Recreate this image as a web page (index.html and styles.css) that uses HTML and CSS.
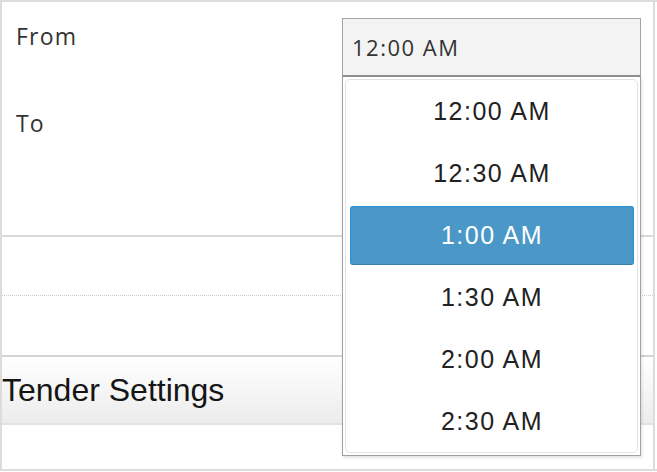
FILE: index.html
```html
<!DOCTYPE html>
<html lang="en">
<head>
<meta charset="utf-8">
<title>Store hours</title>
<link rel="stylesheet" href="styles.css">
</head>
<body>
<div class="page">
  <div class="frame">
    <div class="form">
      <div class="row row-from">
        <div class="label">From</div>
        <div class="select-wrap">
          <div class="select">12:00 AM</div>
          <div class="dropdown">
            <div class="inner">
              <ul class="options">
                <li class="option">12:00 AM</li>
                <li class="option">12:30 AM</li>
                <li class="option selected">1:00 AM</li>
                <li class="option">1:30 AM</li>
                <li class="option">2:00 AM</li>
                <li class="option">2:30 AM</li>
              </ul>
            </div>
          </div>
        </div>
      </div>
      <div class="row row-to">
        <div class="label">To</div>
      </div>
    </div>
    <div class="band band-dotted"></div>
    <div class="band band-plain"></div>
    <div class="section-head">Tender Settings</div>
  </div>
</div>
</body>
</html>
```

FILE: styles.css
```css
html, body {
  margin: 0;
  padding: 0;
  background: #ffffff;
}

.page {
  width: 657px;
  height: 471px;
  box-sizing: border-box;
  border-top: 2px solid #dcdcdc;
  border-bottom: 2px solid #dcdcdc;
}

.frame {
  width: 655px;
  height: 100%;
  box-sizing: border-box;
  border-left: 2px solid #dcdcdc;
  border-right: 2px solid #dcdcdc;
}

.form {
  height: 235px;
  padding-top: 16px;
  box-sizing: border-box;
  border-bottom: 2px solid #d9d9d9;
}

.row {
  display: flex;
  align-items: flex-start;
  padding-left: 14px;
}

.row-to {
  margin-top: 31px;
}

.label {
  width: 326px;
  flex: none;
  font-family: "Open Sans", "DejaVu Sans", sans-serif;
  font-size: 23px;
  line-height: 31px;
  letter-spacing: 1.2px;
  color: #333333;
}

.row-from .label {
  margin-top: 3px;
}

.select-wrap {
  position: relative;
  width: 299px;
  flex: none;
}

.select {
  height: 59px;
  box-sizing: border-box;
  border: 1px solid #a4a4a4;
  border-bottom: 2px solid #8e8e8e;
  background: #f3f3f3;
  padding: 0 0 1px 9px;
  display: flex;
  align-items: center;
  font-family: "Open Sans", "DejaVu Sans", sans-serif;
  font-size: 22px;
  line-height: 30px;
  letter-spacing: 1.5px;
  color: #333333;
}

.dropdown {
  position: absolute;
  top: 59px;
  left: 0;
  width: 299px;
  box-sizing: border-box;
  padding: 2px;
  background: #ffffff;
  border: 1px solid #a0a0a0;
  border-top: none;
  box-shadow: 1px 2px 3px rgba(0, 0, 0, 0.12);
  z-index: 2;
}

.inner {
  border: 1px solid #e3e3e3;
  border-radius: 5px;
}

.options {
  margin: 0;
  padding: 0;
  list-style: none;
  display: flex;
  flex-direction: column;
}

.option {
  height: 59px;
  margin: 2px 3px 1px 4px;
  box-sizing: border-box;
  display: flex;
  align-items: center;
  justify-content: center;
  font-family: "Liberation Sans", Arial, sans-serif;
  font-size: 25px;
  letter-spacing: 1.5px;
  color: #222222;
  border: 1px solid transparent;
  border-radius: 3px;
}

.option.selected {
  background: #4b98c8;
  border-color: #2990d6;
  border-bottom-color: #3a7fae;
  color: #ffffff;
}

.band-dotted {
  height: 58px;
  border-bottom: 1px dotted #cccccc;
}

.band-plain {
  height: 59px;
  border-bottom: 2px solid #d4d4d4;
}

.section-head {
  height: 68px;
  box-sizing: border-box;
  border-bottom: 2px solid #e2e2e2;
  background: linear-gradient(to bottom, #ffffff 0%, #ececec 100%);
  display: flex;
  align-items: center;
  font-family: "Liberation Sans", Arial, sans-serif;
  font-size: 32px;
  color: #151515;
}
```
